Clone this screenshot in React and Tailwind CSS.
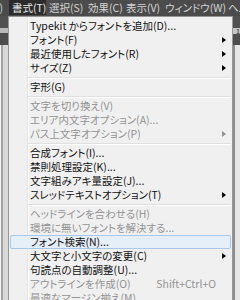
const menuBar = [
  { label: "書式(T)", w: "w-[37px]", active: true },
  { label: "選択(S)", w: "w-[39px]" },
  { label: "効果(C)", w: "w-[38px]" },
  { label: "表示(V)", w: "w-[39px]" },
  { label: "ウィンドウ(W)", w: "w-[63px]" },
  { label: "ヘルプ(H)", w: "w-[60px]" }
];

const items = [
  { label: "Typekit からフォントを追加(D)..." },
  { label: "フォント(F)", sub: true },
  { label: "最近使用したフォント(R)", sub: true },
  { label: "サイズ(Z)", sub: true },
  "sep",
  { label: "字形(G)" },
  "sep",
  { label: "文字を切り換え(V)", off: true },
  { label: "エリア内文字オプション(A)...", off: true },
  { label: "パス上文字オプション(P)", off: true, sub: true },
  "sep",
  { label: "合成フォント(I)..." },
  { label: "禁則処理設定(K)..." },
  { label: "文字組みアキ量設定(J)..." },
  { label: "スレッドテキストオプション(T)", sub: true },
  "sep",
  { label: "ヘッドラインを合わせる(H)", off: true },
  { label: "環境に無いフォントを解決する...", off: true },
  { label: "フォント検索(N)...", hover: true },
  { label: "大文字と小文字の変更(C)", sub: true },
  { label: "句読点の自動調整(U)..." },
  { label: "アウトラインを作成(O)", off: true, shortcut: "Shift+Ctrl+O" },
  { label: "最適なマージン揃え(M)", off: true }
];

function MenuRow({ item }) {
  if (item === "sep") {
    return (
      <div className="flex h-[5px] shrink-0 flex-col justify-center pl-[19px] pr-[1px]">
        <div className="h-px bg-[#e0e0e0]" />
        <div className="h-px bg-white" />
      </div>
    );
  }

  return (
    <div
      className={
        "mx-[1px] flex h-[14px] shrink-0 items-center rounded-[2px] border pl-[19px] pr-[4px] leading-[12px] " +
        (item.hover
          ? "border-[#a8c8ea] bg-[#e6eef8]"
          : "border-transparent") +
        (item.off ? " text-[#939393]" : " text-[#111]")
      }
    >
      <span className="flex-1 whitespace-nowrap">{item.label}</span>
      {item.shortcut ? (
        <span className="mr-[10px] whitespace-nowrap">{item.shortcut}</span>
      ) : null}
      {item.sub ? (
        <span
          className={
            "h-0 w-0 border-y-[3px] border-l-[4px] border-y-transparent " +
            (item.off ? "border-l-[#939393]" : "border-l-black")
          }
        />
      ) : null}
    </div>
  );
}

export default function App() {
  return (
    <main className="flex h-[300px] w-[240px] flex-col overflow-hidden bg-[#d8d8d8] text-[10.5px] [font-family:'Noto_Sans_CJK_JP','Noto_Sans',sans-serif] [font-feature-settings:'palt']">
      <header className="flex h-[16px] shrink-0 items-stretch overflow-hidden bg-[#4b4b4b] leading-[16px] text-[#d4d4d4]">
        <span className="flex w-[9px] shrink-0 justify-end overflow-hidden pr-[6px]">)</span>
        {menuBar.map((m) => (
          <span
            key={m.label}
            className={
              "shrink-0 whitespace-nowrap pl-[3px] " +
              m.w +
              (m.active ? " mb-[1px] bg-[#2b2b2b] text-[#e8e8e8]" : "")
            }
          >
            {m.label}
          </span>
        ))}
      </header>

      <div className="flex flex-1">
        <aside className="flex w-[8px] shrink-0 flex-col">
          <div className="h-[12px] bg-[#505050]" />
          <div className="h-[5px] bg-[#b9b9b9]" />
          <div className="h-[12px] bg-[#4e4e4e]" />
          <div className="flex flex-1 bg-[#d9d9d9]">
            <div className="w-[1px] bg-[#f2f2f2]" />
            <div className="w-[2px] bg-[#a3a3a3]" />
          </div>
        </aside>

        <section className="flex w-[225px] shrink-0 flex-col border border-b-0 border-[#979797] bg-[#f0f0f0] bg-[linear-gradient(to_right,#f0f0f0_18px,#e2e3e3_18px,#e2e3e3_19px,#fff_19px,#fff_20px,#f0f0f0_20px)] pt-[2px]">
          {items.map((item, i) => (
            <MenuRow key={i} item={item} />
          ))}
        </section>

        <aside className="flex flex-1 flex-col">
          <div className="h-[12px] bg-[#505050]" />
          <div className="flex h-[6px] items-center overflow-hidden bg-[#c4c4c4] pl-[3px] text-[7px] leading-[6px] text-[#222]">
            10
          </div>
          <div className="h-[11px] bg-[#4e4e4e]" />
          <div className="flex flex-1 bg-[#e6e6e6]">
            <div className="w-[2px] bg-[#8e8e8e]" />
          </div>
        </aside>
      </div>
    </main>
  );
}
